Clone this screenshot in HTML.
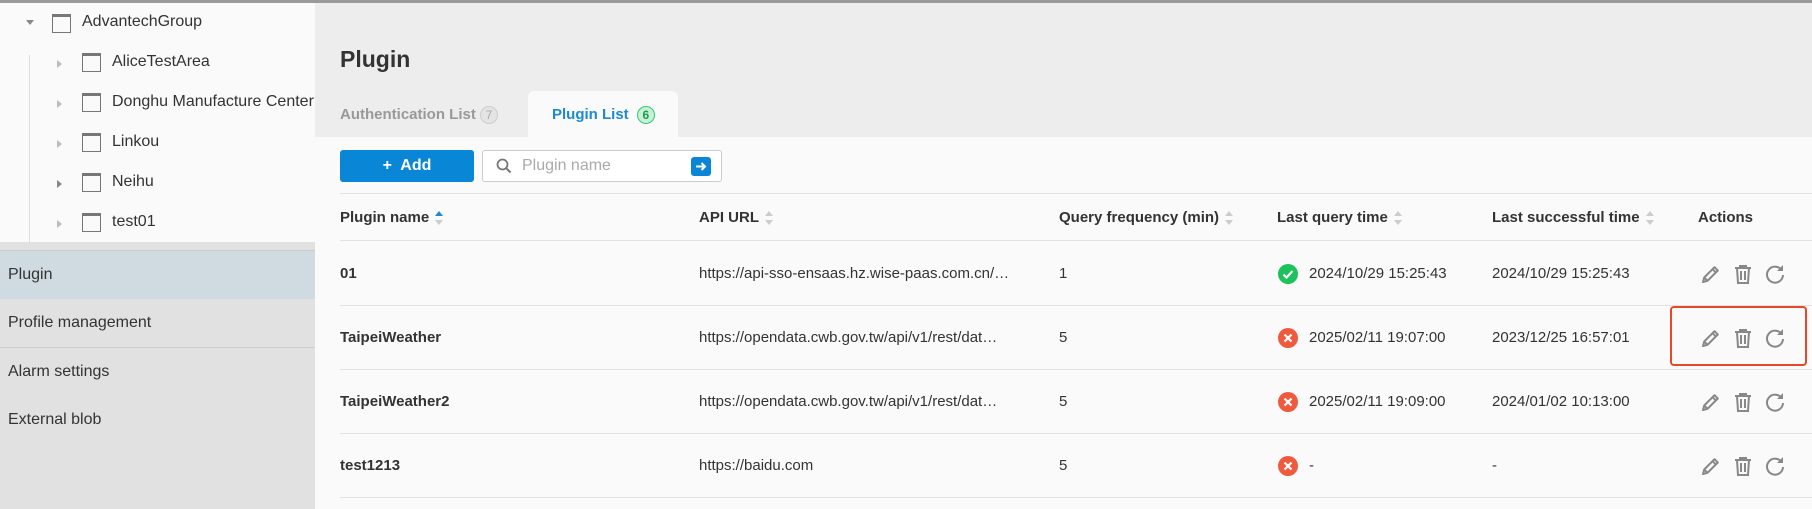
<!DOCTYPE html>
<html><head><meta charset="utf-8"><style>
*{box-sizing:border-box;margin:0;padding:0}
body{width:1812px;height:509px;overflow:hidden;font-family:"Liberation Sans",sans-serif;background:#fafafa;position:relative;color:#333}
.a{position:absolute;white-space:nowrap}
.side{left:0;top:0;width:315px;height:509px;background:#e1e1e1}
.tree{left:0;top:3px;width:315px;height:239px;background:#fafafa}
.fold{position:absolute;width:19px;height:19px;border:1.5px solid #777;border-top-width:3px}
.tri{position:absolute;width:0;height:0;border-left:5px solid #bbb;border-top:4px solid transparent;border-bottom:4px solid transparent}
.tt{font-size:16px;color:#333}
.menu{font-size:16px;color:#333;left:8px}
.hdr{font-size:15px;font-weight:bold;color:#333}
.td{font-size:15px;color:#333}
.b{font-weight:bold}
.line{position:absolute;left:340px;width:1472px;height:1px;background:#e2e2e2}
.sort{display:inline-block;vertical-align:middle;margin-left:6px;width:8px;height:14px;position:relative}
.sort:before{content:"";position:absolute;top:0;left:0;border-left:4px solid transparent;border-right:4px solid transparent;border-bottom:5px solid #ccc}
.sort:after{content:"";position:absolute;bottom:0;left:0;border-left:4px solid transparent;border-right:4px solid transparent;border-top:5px solid #ccc}
.sort.up:before{border-bottom-color:#1a8ad6}
.st{position:absolute;width:20px;height:20px;border-radius:50%}
</style></head><body>
<div class="a" style="left:0;top:0;width:1812px;height:3px;background:#9a9a9a;z-index:5"></div>
<div class="a side"></div>
<div class="a tree"></div>
<div class="a" style="left:29px;top:55px;width:1px;height:187px;background:#ddd"></div>
<div class="a" style="left:26px;top:20px;border-left:4px solid transparent;border-right:4px solid transparent;border-top:5px solid #888"></div>
<div class="fold" style="left:52px;top:14px"></div><div class="a tt" style="left:82px;top:13px">AdvantechGroup</div>
<div class="tri" style="left:57px;top:60px"></div><div class="fold" style="left:82px;top:53px"></div><div class="a tt" style="left:112px;top:53px">AliceTestArea</div>
<div class="tri" style="left:57px;top:100px"></div><div class="fold" style="left:82px;top:93px"></div><div class="a tt" style="left:112px;top:93px">Donghu Manufacture Center</div>
<div class="tri" style="left:57px;top:140px"></div><div class="fold" style="left:82px;top:133px"></div><div class="a tt" style="left:112px;top:133px">Linkou</div>
<div class="tri" style="left:57px;top:180px;border-left-color:#888"></div><div class="fold" style="left:82px;top:173px"></div><div class="a tt" style="left:112px;top:173px">Neihu</div>
<div class="tri" style="left:57px;top:220px"></div><div class="fold" style="left:82px;top:213px"></div><div class="a tt" style="left:112px;top:213px">test01</div>
<div class="a" style="left:0;top:250px;width:315px;height:1px;background:#ccc"></div>
<div class="a" style="left:0;top:251px;width:315px;height:48px;background:#d0dbe1"></div>
<div class="a menu" style="top:266px">Plugin</div>
<div class="a menu" style="top:314px">Profile management</div>
<div class="a" style="left:0;top:347px;width:315px;height:1px;background:#ccc"></div>
<div class="a menu" style="top:363px">Alarm settings</div>
<div class="a menu" style="top:411px">External blob</div>
<div class="a" style="left:315px;top:3px;width:1497px;height:134px;background:#ededed"></div>
<div class="a" style="left:340px;top:46px;font-size:23px;font-weight:bold;color:#333">Plugin</div>
<div class="a" style="left:340px;top:106px;font-size:15px;font-weight:bold;color:#999">Authentication List <span style="display:inline-block;width:18px;height:18px;border:1px solid #ccc;border-radius:50%;background:#e4e4e4;font-size:12px;text-align:center;line-height:16px;color:#aaa;font-weight:normal;vertical-align:middle">7</span></div>
<div class="a" style="left:528px;top:91px;width:150px;height:47px;background:#fafafa;border-radius:6px 6px 0 0"></div>
<div class="a" style="left:552px;top:106px;font-size:15px;font-weight:bold;color:#1a8ad6">Plugin List <span style="display:inline-block;width:18px;height:18px;border:1px solid #2ecc71;border-radius:50%;background:#c8f0d6;font-size:12px;text-align:center;line-height:16px;color:#1a9b4b;font-weight:bold;vertical-align:middle;margin-left:4px">6</span></div>
<div class="a" style="left:340px;top:150px;width:134px;height:32px;background:#0a86d6;border-radius:3px;color:#fff;font-size:16px;font-weight:bold;text-align:center;line-height:32px">+&nbsp; Add</div>
<div class="a" style="left:482px;top:150px;width:240px;height:32px;background:#fff;border:1px solid #ccc;border-radius:3px"></div>
<svg class="a" style="left:496px;top:158px" width="16" height="16" viewBox="0 0 16 16"><circle cx="6.5" cy="6.5" r="5" fill="none" stroke="#777" stroke-width="1.8"/><path d="M10 10l4.5 4.5" stroke="#777" stroke-width="2"/></svg>
<div class="a" style="left:522px;top:157px;font-size:16px;color:#aaa">Plugin name</div>
<div class="a" style="left:691px;top:157px;width:20px;height:19px;background:#0a86d6;border-radius:3px"></div>
<svg class="a" style="left:691px;top:157px" width="20" height="19"><path d="M5 9.5h9M10.5 6l3.5 3.5-3.5 3.5" stroke="#fff" stroke-width="2" fill="none"/></svg>
<div class="line" style="top:193px"></div>
<div class="a hdr" style="left:340px;top:209px">Plugin name<span class="sort up"></span></div>
<div class="a hdr" style="left:699px;top:209px">API URL<span class="sort"></span></div>
<div class="a hdr" style="left:1059px;top:209px">Query frequency (min)<span class="sort"></span></div>
<div class="a hdr" style="left:1277px;top:209px">Last query time<span class="sort"></span></div>
<div class="a hdr" style="left:1492px;top:209px">Last successful time<span class="sort"></span></div>
<div class="a hdr" style="left:1698px;top:209px">Actions</div>
<div class="line" style="top:240px"></div>
<div class="line" style="top:305px"></div>
<div class="line" style="top:369px"></div>
<div class="line" style="top:433px"></div>
<div class="line" style="top:497px"></div>
<div class="a td b" style="left:340px;top:265px">01</div>
<div class="a td" style="left:699px;top:265px">https://api-sso-ensaas.hz.wise-paas.com.cn/…</div>
<div class="a td" style="left:1059px;top:265px">1</div>
<div class="st" style="left:1278px;top:264px;background:#1cc25a"></div>
<svg class="a" style="left:1278px;top:264px" width="20" height="20"><path d="M5.5 10.5l3 3 6-6.5" stroke="#fff" stroke-width="2.2" fill="none"/></svg>
<div class="a td" style="left:1309px;top:265px">2024/10/29 15:25:43</div>
<div class="a td" style="left:1492px;top:265px">2024/10/29 15:25:43</div>
<div class="a td b" style="left:340px;top:329px">TaipeiWeather</div>
<div class="a td" style="left:699px;top:329px">https://opendata.cwb.gov.tw/api/v1/rest/dat…</div>
<div class="a td" style="left:1059px;top:329px">5</div>
<div class="st" style="left:1278px;top:328px;background:#f05a3c"></div>
<svg class="a" style="left:1278px;top:328px" width="20" height="20"><path d="M6.5 6.5l7 7M13.5 6.5l-7 7" stroke="#fff" stroke-width="2.2"/></svg>
<div class="a td" style="left:1309px;top:329px">2025/02/11 19:07:00</div>
<div class="a td" style="left:1492px;top:329px">2023/12/25 16:57:01</div>
<div class="a td b" style="left:340px;top:393px">TaipeiWeather2</div>
<div class="a td" style="left:699px;top:393px">https://opendata.cwb.gov.tw/api/v1/rest/dat…</div>
<div class="a td" style="left:1059px;top:393px">5</div>
<div class="st" style="left:1278px;top:392px;background:#f05a3c"></div>
<svg class="a" style="left:1278px;top:392px" width="20" height="20"><path d="M6.5 6.5l7 7M13.5 6.5l-7 7" stroke="#fff" stroke-width="2.2"/></svg>
<div class="a td" style="left:1309px;top:393px">2025/02/11 19:09:00</div>
<div class="a td" style="left:1492px;top:393px">2024/01/02 10:13:00</div>
<div class="a td b" style="left:340px;top:457px">test1213</div>
<div class="a td" style="left:699px;top:457px">https://baidu.com</div>
<div class="a td" style="left:1059px;top:457px">5</div>
<div class="st" style="left:1278px;top:456px;background:#f05a3c"></div>
<svg class="a" style="left:1278px;top:456px" width="20" height="20"><path d="M6.5 6.5l7 7M13.5 6.5l-7 7" stroke="#fff" stroke-width="2.2"/></svg>
<div class="a td" style="left:1309px;top:457px">-</div>
<div class="a td" style="left:1492px;top:457px">-</div>
<svg width="0" height="0" style="position:absolute"><defs>
<g id="ic">
<path d="M3 19l1.2-4.5L14.5 4.2l3.3 3.3L7.5 17.8z M4.2 14.5l3.3 3.3 M12.5 6.2l3.3 3.3" fill="none" stroke="#888" stroke-width="2" stroke-linejoin="round"/>
<g transform="translate(32,0)"><path d="M3 5h16M8 5V3h6v2M5 5l1 15h10l1-15M9 8v9M13 8v9" fill="none" stroke="#888" stroke-width="2"/></g>
<g transform="translate(64,0)"><path d="M17.5 7A8 8 0 1 0 19 12" fill="none" stroke="#888" stroke-width="2"/><path d="M19 2v6h-6z" fill="#888"/></g>
</g></defs></svg>
<svg class="a" style="left:1700px;top:263px" width="90" height="22"><use href="#ic"/></svg>
<svg class="a" style="left:1700px;top:327px" width="90" height="22"><use href="#ic"/></svg>
<svg class="a" style="left:1700px;top:391px" width="90" height="22"><use href="#ic"/></svg>
<svg class="a" style="left:1700px;top:455px" width="90" height="22"><use href="#ic"/></svg>
<div class="a" style="left:1670px;top:306px;width:137px;height:60px;border:2px solid #e8472c;border-radius:4px"></div>
</body></html>
